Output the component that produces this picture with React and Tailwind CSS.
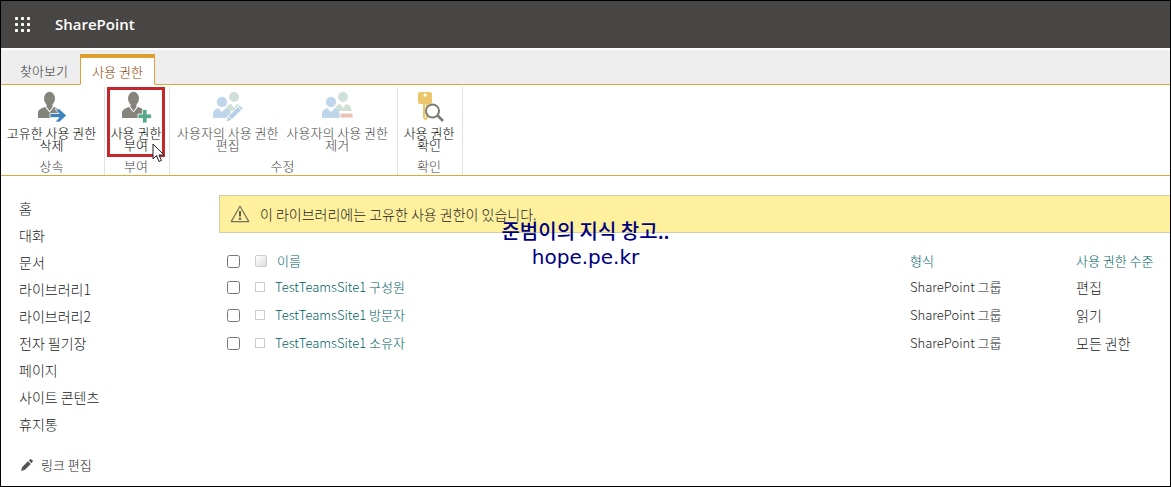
import React from "react";

const navItems = ["홈", "대화", "문서", "라이브러리1", "라이브러리2", "전자 필기장", "페이지", "사이트 콘텐츠", "휴지통"];

const rows = [
  { name: "TestTeamsSite1 구성원", type: "SharePoint 그룹", level: "편집" },
  { name: "TestTeamsSite1 방문자", type: "SharePoint 그룹", level: "읽기" },
  { name: "TestTeamsSite1 소유자", type: "SharePoint 그룹", level: "모든 권한" },
];

function Waffle() {
  return (
    <svg width="16" height="16" viewBox="0 0 16 16" fill="#fff" aria-hidden="true">
      {[0, 6, 12].map((y) => [0, 6, 12].map((x) => <rect key={`${x}-${y}`} x={x} y={y} width="3" height="3" rx="0.8" />))}
    </svg>
  );
}

function Person({ fill }) {
  return (
    <>
      <ellipse cx="13.500" cy="7.500" rx="5.500" ry="6.800" fill={fill} />
      <path d="M2 27v-5c0-3 2.500-4.500 7-6l4.500 5.500 4.500-5.500c4.500 1.500 7 3 7 6v5z" fill={fill} />
      <path d="M10.500 13h6v3l-3 4-3-4z" fill={fill} />
    </>
  );
}

function RemoveUniqueIcon() {
  return (
    <svg width="32" height="32" viewBox="0 0 32 32" aria-hidden="true">
      <Person fill="#84847c" />
      <path d="M14 22.500h9l-4-4.500h4.500l7 6.500-7 6.500H19l4-4.500h-9z" fill="#3b82bd" stroke="#fff" strokeWidth="0.8" />
    </svg>
  );
}

function GrantIcon() {
  return (
    <svg width="32" height="32" viewBox="0 0 32 32" aria-hidden="true">
      <Person fill="#84847c" />
      <path d="M22.500 18.500H27V23h4.500v4.500H27V32h-4.500v-4.500H18V23h4.500z" fill="#5aa88a" stroke="#fff" strokeWidth="0.8" />
    </svg>
  );
}

function People() {
  return (
    <>
      <circle cx="22" cy="6" r="5" fill="#d0e0d7" />
      <path d="M14 20c0-5 3-7 5-7l3 4 3-4c4 1 5.500 3 5.500 7z" fill="#d0e0d7" />
      <circle cx="10" cy="11" r="5.500" fill="#bfd5e9" stroke="#fff" strokeWidth="0.8" />
      <path d="M1 27v-4c0-3 2-5 5-6l4 4 4-4c3 1 5 3 5 6v4z" fill="#bfd5e9" />
    </>
  );
}

function EditUserIcon() {
  return (
    <svg width="32" height="32" viewBox="0 0 32 32" aria-hidden="true">
      <People />
      <path d="M14 31l1.500-5L27.500 14l3.500 3.500L19 29.500z" fill="#b5cee5" stroke="#fff" strokeWidth="1" />
      <path d="M25.500 15.500l4 4M16 25l4 4" stroke="#fff" strokeWidth="1" />
    </svg>
  );
}

function RemoveUserIcon() {
  return (
    <svg width="32" height="32" viewBox="0 0 32 32" aria-hidden="true">
      <People />
      <rect x="19" y="22" width="13" height="5" fill="#edc0b5" stroke="#fff" strokeWidth="1" />
    </svg>
  );
}

function CheckIcon() {
  return (
    <svg width="32" height="32" viewBox="0 0 32 32" aria-hidden="true">
      <path fillRule="evenodd" d="M7 1h10q2 0 2 2v8q0 2-2 2h-2v14l-2.500 2.500L10 27V13H7q-2 0-2-2V3q0-2 2-2zM12 2.500a1.600 1.600 0 1 0 .1 0z" fill="#ebc66b" />
      <path d="M12.500 13v14" stroke="#fff" strokeWidth="0.8" />
      <circle cx="19.500" cy="20" r="6.500" fill="#fff" stroke="#7c7c76" strokeWidth="2" />
      <path d="M24.500 24.500l5.500 5.500" stroke="#7c7c76" strokeWidth="2.600" />
    </svg>
  );
}

function WarningIcon() {
  return (
    <svg width="20" height="18" viewBox="0 0 20 18" fill="none" aria-hidden="true">
      <path d="M10 1.200L18.800 16.600H1.200z" stroke="#77705c" strokeWidth="1.200" strokeLinejoin="round" />
      <path d="M10 6v5.500" stroke="#66604f" strokeWidth="2" />
      <circle cx="10" cy="13.800" r="1.200" fill="#66604f" />
    </svg>
  );
}

function PencilIcon() {
  return (
    <svg width="12" height="12" viewBox="0 0 12 12" fill="#555" aria-hidden="true">
      <path d="M0 12l1.200-4L7 2.200 9.800 5 4 10.800zM7.800 1.400L9.200 0.200Q9.800-.2 10.400.4l1.200 1.200q.5.600 0 1.200l-1.200 1.400z" />
    </svg>
  );
}

function RibbonButton({ icon, lines, disabled, highlight }) {
  return (
    <button
      type="button"
      disabled={disabled}
      className={`relative flex flex-col items-center px-1 pt-1 text-[13px] leading-3 whitespace-nowrap ${disabled ? "text-[#444]" : "text-black"}`}
    >
      {icon}
      <span className="mt-1">{lines[0]}</span>
      <span>{lines[1]}</span>
      {highlight && <span className="absolute inset-x-0 top-0 -bottom-1.5 border-3 border-[#c4262e]" />}
      {highlight && (
        <svg className="absolute right-0 -bottom-3" width="13" height="20" viewBox="0 0 13 20" aria-hidden="true">
          <path d="M1 1v15l3.500-3.500 2.500 6 2.500-1-2.500-5.500h5z" fill="#fff" stroke="#222" strokeWidth="1" />
        </svg>
      )}
    </button>
  );
}

function RibbonGroup({ label, className, children }) {
  return (
    <section className={`flex flex-col items-center justify-between border-r border-[#e1e1e1] pr-0.5 pb-px ${className}`}>
      <div className="flex">{children}</div>
      <h2 className="text-[13px] leading-4 text-[#444]">{label}</h2>
    </section>
  );
}

export default function App() {
  return (
    <div className="relative min-h-screen overflow-hidden border border-black bg-white [font-family:'Noto_Sans_CJK_KR',sans-serif] text-[13px] font-light text-[#222]">
      <header className="flex h-[47px] items-center gap-6 bg-[#484644] pl-3.5 text-white">
        <button type="button" aria-label="앱 시작 관리자"><Waffle /></button>
        <span className="[font-family:'Open_Sans',sans-serif] text-[15px] font-semibold">SharePoint</span>
      </header>

      <nav className="mt-0.5 flex h-[35px] items-end border-b border-[#e0a83c] bg-[#eee] pl-[7px]">
        <button type="button" className="h-7 w-[72px] pt-0.5 text-[13px] text-[#333]">찾아보기</button>
        <button type="button" className="-mb-px h-[31px] w-[75px] border border-t-4 border-[#e0a030] border-b-white bg-white pt-0.5 text-[13px] text-[#8a4000]">사용 권한</button>
      </nav>

      <div className="flex h-[91px] border-b border-[#e0a83c] pt-0.5">
        <RibbonGroup label="상속" className="w-[104px] shrink-0">
          <RibbonButton icon={<RemoveUniqueIcon />} lines={["고유한 사용 권한", "삭제"]} />
        </RibbonGroup>
        <RibbonGroup label="부여" className="w-[65px] shrink-0">
          <RibbonButton icon={<GrantIcon />} lines={["사용 권한", "부여"]} highlight />
        </RibbonGroup>
        <RibbonGroup label="수정" className="w-[228px] shrink-0">
          <RibbonButton icon={<EditUserIcon />} lines={["사용자의 사용 권한", "편집"]} disabled />
          <RibbonButton icon={<RemoveUserIcon />} lines={["사용자의 사용 권한", "제거"]} disabled />
        </RibbonGroup>
        <RibbonGroup label="확인" className="w-[65px] shrink-0">
          <RibbonButton icon={<CheckIcon />} lines={["사용 권한", "확인"]} />
        </RibbonGroup>
      </div>

      <div className="flex">
        <aside className="w-[218px] shrink-0 pl-[18px] pt-5">
          <ul className="text-sm">
            {navItems.map((item) => (
              <li key={item} className="h-[27px] leading-6"><a href="#">{item}</a></li>
            ))}
          </ul>
          <a href="#" className="mt-4 flex items-center gap-2 pl-0.5 text-[13px] leading-5"><PencilIcon />링크 편집</a>
        </aside>

        <main className="min-w-0 grow pt-[19px]">
          <div role="status" className="flex h-[38px] items-center gap-2.5 border border-r-0 border-[#cfcdad] bg-[#fff09d] pl-2.5 text-sm">
            <WarningIcon />
            <span>이 라이브러리에는 고유한 사용 권한이 있습니다.</span>
          </div>
          <table className="mt-4 w-full table-fixed text-left">
            <colgroup>
              <col className="w-[30px]" />
              <col className="w-[26px]" />
              <col />
              <col className="w-[166px]" />
              <col className="w-[94px]" />
            </colgroup>
            <thead>
              <tr className="h-6 text-[13px] text-[#005f66]">
                <th className="pl-2"><input type="checkbox" aria-label="모두 선택" className="block size-[13px]" /></th>
                <th className="pl-1.5"><span className="block size-3 rounded-xs border border-[#ccc] bg-linear-to-br from-white to-[#ddd]" /></th>
                <th className="pl-0.5 font-light">이름</th>
                <th className="font-light">형식</th>
                <th className="font-light">사용 권한 수준</th>
              </tr>
            </thead>
            <tbody>
              {rows.map((row) => (
                <tr key={row.name} className="h-7 text-[13px]">
                  <td className="pl-2"><input type="checkbox" aria-label={row.name} className="block size-[13px]" /></td>
                  <td className="pl-1.5"><span className="block size-2.5 border border-[#ccc]" /></td>
                  <td><a href="#" className="text-[#005f66]">{row.name}</a></td>
                  <td>{row.type}</td>
                  <td className="text-sm">{row.level}</td>
                </tr>
              ))}
            </tbody>
          </table>
        </main>
      </div>

      <p className="pointer-events-none absolute inset-x-0 top-[217px] text-center text-xl leading-[25px] font-medium text-[#00007f]">
        준범이의 지식 창고..<br />
        <span className="[font-family:'DejaVu_Sans',sans-serif] text-xl leading-[25px] font-normal">hope.pe.kr</span>
      </p>
    </div>
  );
}
